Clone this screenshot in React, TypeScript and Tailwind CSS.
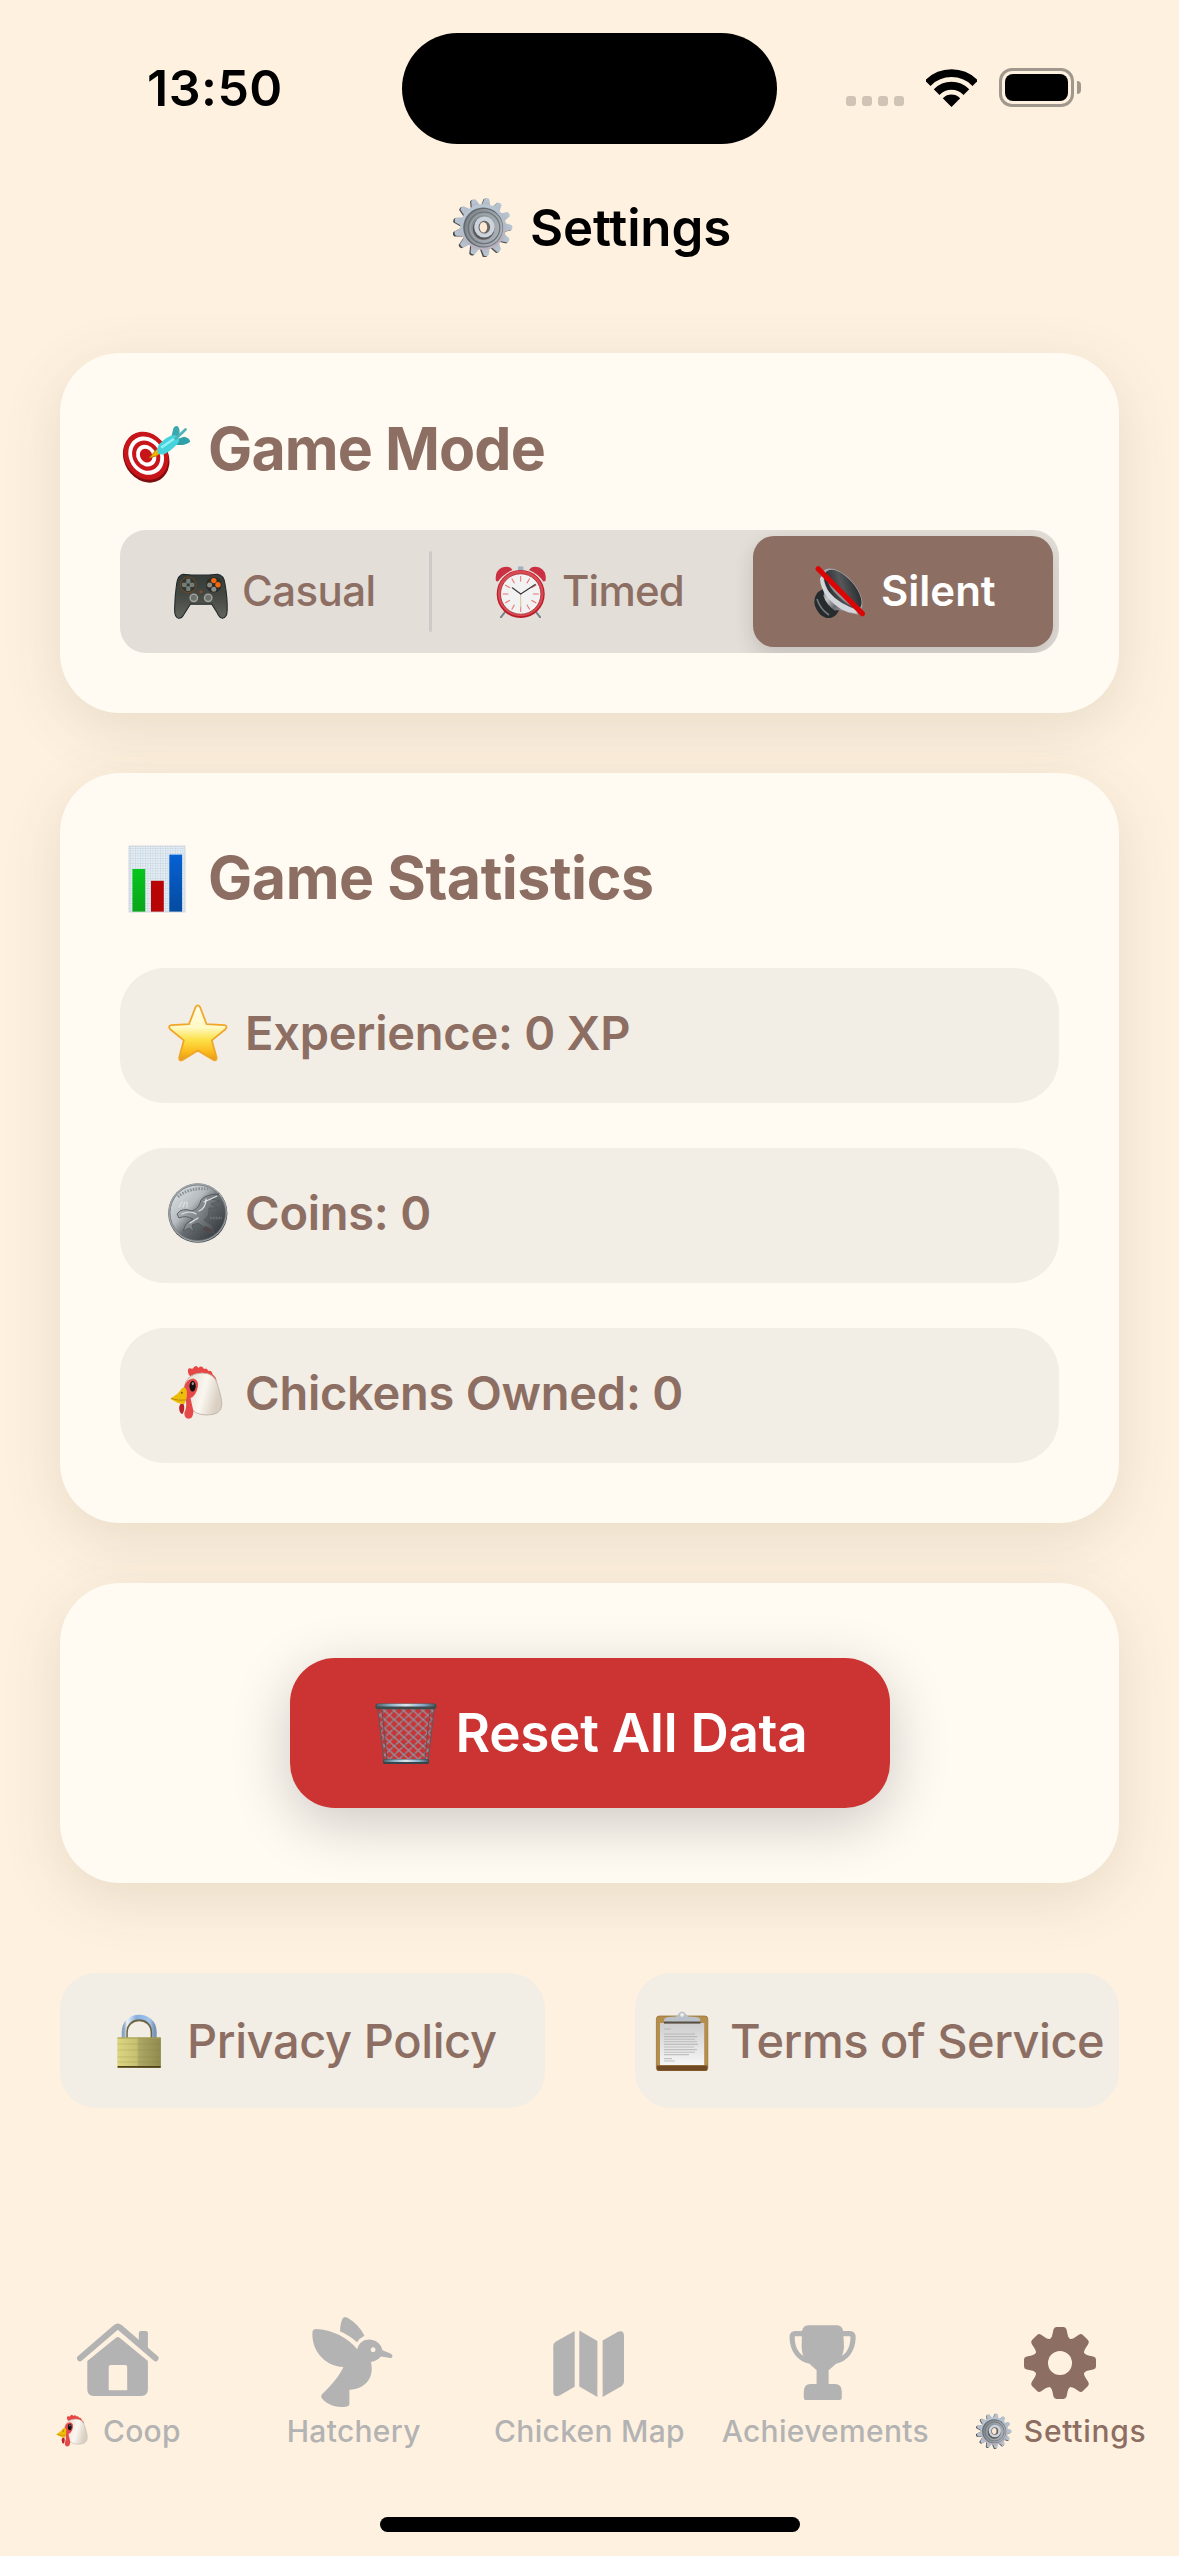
import React from "react";

type IconProps = { className?: string };

const teeth = (count: number) => Array.from({ length: count }, (_, i) => (360 / count) * i);

function SilverGear({ className }: IconProps) {
  return (
    <svg viewBox="0 0 60 60" className={className}>
      <defs>
        <linearGradient id="sg-body" x1="0" y1="0" x2="0.3" y2="1">
          <stop offset="0" stopColor="#b9c9d8" />
          <stop offset="0.5" stopColor="#b4bfcb" />
          <stop offset="1" stopColor="#b9b2be" />
        </linearGradient>
        <linearGradient id="sg-dish" x1="0" y1="0" x2="1" y2="0.4">
          <stop offset="0" stopColor="#7b8389" />
          <stop offset="0.6" stopColor="#949ca2" />
          <stop offset="1" stopColor="#aab2b8" />
        </linearGradient>
      </defs>
      <g fill="#4d4a4a">
        {teeth(13).map((a) => (
          <path key={a} d="M24 13 L26.6 2 Q29 0.4 31 2 L34 13Z" transform={`rotate(${a + 8} 28.9 30.8)`} />
        ))}
      </g>
      <g fill="url(#sg-body)">
        {teeth(13).map((a) => (
          <path key={a} d="M24.6 13 L27.6 1.6 Q30.3 -0.2 32.4 1.6 L35.8 13Z" transform={`rotate(${a + 8} 30.2 30)`} />
        ))}
        <circle cx="30.2" cy="30" r="23" />
      </g>
      <circle cx="30.2" cy="30.6" r="20" fill="#656b71" />
      <circle cx="30.8" cy="30.8" r="18.8" fill="url(#sg-dish)" />
      <circle cx="31" cy="30.8" r="15.8" fill="none" stroke="#6b7177" strokeWidth="1.2" />
      <circle cx="31" cy="30.8" r="13.6" fill="none" stroke="#a4abb1" strokeWidth="1" />
      <ellipse cx="30.6" cy="31.6" rx="10.8" ry="11.2" fill="#5a5659" />
      <ellipse cx="31.4" cy="30" rx="10.2" ry="10.6" fill="#cbd3dc" />
      <ellipse cx="31.3" cy="30.2" rx="5.8" ry="6.4" fill="#6a625f" />
      <ellipse cx="30.4" cy="30.2" rx="3.8" ry="5.2" fill="#fbe9d6" />
    </svg>
  );
}

function Target({ className }: IconProps) {
  return (
    <svg viewBox="0 0 70 70" className={className}>
      <g transform="rotate(-32 26.5 45)">
        <ellipse cx="27" cy="43.6" rx="22" ry="26.2" fill="#7d0d10" />
        <ellipse cx="27.8" cy="42" rx="21.4" ry="25" fill="#c8151a" />
        <ellipse cx="28" cy="42" rx="17" ry="20" fill="#fff" />
        <ellipse cx="28" cy="42" rx="13.4" ry="15.8" fill="#c8151a" />
        <ellipse cx="28" cy="42" rx="9.6" ry="11.4" fill="#fff" />
        <ellipse cx="28" cy="42" rx="6" ry="7.2" fill="#c8151a" />
      </g>
      <path d="M29 44 L37 35 L41 39 Q37 42.5 29 44Z" fill="#f4b400" stroke="#a8700a" strokeWidth="0.8" />
      <path d="M51 24 L53.5 14 Q56 10.5 58.5 13 Q61 18 57.5 25Z" fill="#3aa9ae" />
      <path d="M56 25.5 L64 22.8 Q70.5 24.5 70 28 Q64 32.5 55 30.5Z" fill="#2fa0a8" />
      <path d="M37.6 39 Q36 32 42.5 27 Q50 20.5 56 21.5 Q61 24 58 29 Q52 36 46.5 39 Q41.5 42 37.6 39Z" fill="#46d3dc" />
      <path d="M56 24.5 L65.5 15.5" stroke="#4fb4ba" strokeWidth="2.8" strokeLinecap="round" />
      <path d="M42 33 L53 25.5" stroke="#8ff0f4" strokeWidth="2.6" strokeLinecap="round" />
    </svg>
  );
}

function Gamepad({ className }: IconProps) {
  return (
    <svg viewBox="0 0 52 52" className={className}>
      <defs>
        <linearGradient id="gp" x1="0" y1="0" x2="0" y2="1">
          <stop offset="0" stopColor="#343b38" />
          <stop offset="0.5" stopColor="#454943" />
          <stop offset="1" stopColor="#62645d" />
        </linearGradient>
      </defs>
      <path
        d="M9 8.3 Q26 10 43.5 8.3 Q50 9 51 18 Q53.5 32 53.2 44 Q53 52 48.5 52.2 Q45.5 52 43 46.5 L37.6 38 Q26.5 38.6 16.5 38 L9.5 49 Q7.6 52.6 4.5 52.2 Q.5 51.5 .6 43 Q.8 30 2.6 18 Q4 9 9 8.3Z"
        fill="url(#gp)"
        stroke="#20292a"
        strokeWidth="1.1"
      />
      <circle cx="14.3" cy="18.8" r="7.8" fill="#303833" stroke="#6d4527" strokeWidth="1.1" />
      <g fill="#767d77">
        <rect x="12.2" y="12.8" width="4.2" height="4.8" rx="1.2" />
        <rect x="12.2" y="20.2" width="4.2" height="4.8" rx="1.2" />
        <rect x="8" y="16.8" width="4.8" height="4.2" rx="1.2" />
        <rect x="15.6" y="16.8" width="4.8" height="4.2" rx="1.2" />
      </g>
      <circle cx="39.8" cy="18.8" r="7.8" fill="#2a2d2a" />
      <circle cx="39.8" cy="14.6" r="2.7" fill="#f2690d" />
      <circle cx="44" cy="18.8" r="2.7" fill="#f2690d" />
      <circle cx="35.6" cy="19" r="2.5" fill="#888b86" />
      <circle cx="39.8" cy="23.2" r="2.5" fill="#888b86" />
      <circle cx="27" cy="25.8" r="1.6" fill="#8b4b1d" />
      <circle cx="19.8" cy="31.8" r="4.4" fill="#a3a6a0" />
      <circle cx="19.8" cy="31.8" r="3" fill="#6d716b" />
      <circle cx="34.2" cy="31.8" r="4.4" fill="#a3a6a0" />
      <circle cx="34.2" cy="31.8" r="3" fill="#6d716b" />
    </svg>
  );
}

function AlarmClock({ className }: IconProps) {
  return (
    <svg viewBox="0 0 52 52" className={className}>
      <path d="M10 46 L6 51.2 M41 46 L45 51.2" stroke="#77818a" strokeWidth="2" strokeLinecap="round" />
      <path d="M23 0.6 h5.4 v3.4 h-5.4z" fill="#a0b2c2" />
      <path d="M1 15 Q-.8 5.5 7 1.5 Q14.5 -1 17.5 4 Q8 8 3 15.5Z" fill="#ca3042" />
      <path d="M50.4 15 Q52.4 5.5 44.4 1.5 Q37 -1 34 4 Q43.4 8 48.4 15.5Z" fill="#ca3042" />
      <circle cx="25.7" cy="28" r="24" fill="#b81c2a" />
      <circle cx="25.7" cy="27.4" r="22.8" fill="#dc4a53" />
      <circle cx="25.7" cy="28" r="20.2" fill="#f2f2f2" stroke="#9e2a30" strokeWidth="0.8" />
      {teeth(12).map((a) => (
        <path key={a} d="M25.7 10 V15.6" stroke="#e8706c" strokeWidth="1" transform={`rotate(${a} 25.7 28)`} />
      ))}
      <path d="M25.7 28 V41.5" stroke="#d9c39a" strokeWidth="1" />
      <path d="M17.3 21.8 L25.7 28 L40.2 18.4" fill="none" stroke="#3a3a3a" strokeWidth="1.2" strokeLinecap="round" />
    </svg>
  );
}

function MutedSpeaker({ className }: IconProps) {
  return (
    <svg viewBox="0 0 52 52" className={className}>
      <defs>
        <linearGradient id="sp" x1="0" y1="0" x2="1" y2="1">
          <stop offset="0" stopColor="#17191a" />
          <stop offset="0.5" stopColor="#55585b" />
          <stop offset="1" stopColor="#1b1d1e" />
        </linearGradient>
        <linearGradient id="sp-c" x1="0" y1="0" x2="1" y2="0.6">
          <stop offset="0" stopColor="#4f5255" />
          <stop offset="0.35" stopColor="#c3c5c8" />
          <stop offset="0.6" stopColor="#6b6d70" />
          <stop offset="1" stopColor="#b5b7ba" />
        </linearGradient>
      </defs>
      <path d="M4 26 Q-1 32 1 40 Q5 51 14 52.4 Q19 52 22 49 L26 43 L9 23Z" fill="#262b2e" />
      <path d="M3 33 Q6 43 15 49" stroke="#767b7f" strokeWidth="1.6" fill="none" />
      <path d="M7 16 Q11 26 9.5 30 Q12 38 20.5 44.5 Q30 43.6 44 48.8 L38 30Z" fill="url(#sp-c)" />
      <ellipse cx="27.6" cy="25" rx="14.2" ry="27.2" transform="rotate(-41 27.6 25)" fill="#a4a9b1" />
      <ellipse cx="28.8" cy="24.2" rx="12.2" ry="24.8" transform="rotate(-41 28.8 24.2)" fill="url(#sp)" />
      <path d="M9 10 Q10 20 15 26 Q25 38 44 44 L42 47.6 Q26 46 14 32 Q6 22 6 12Z" fill="#d3d6da" />
      <path d="M14 16 Q17 25 30 35 Q38 41 43 42 L30 26Z" fill="#a9abae" opacity="0.75" />
      <path d="M4.2 2.8 L48.4 47.6" stroke="#dc0505" strokeWidth="5.2" strokeLinecap="round" />
    </svg>
  );
}

function BarChart({ className }: IconProps) {
  return (
    <svg viewBox="0 0 70 70" className={className}>
      <defs>
        <pattern id="bc-grid" width="2.5" height="2.5" patternUnits="userSpaceOnUse">
          <rect width="2.5" height="2.5" fill="#e8eff3" />
          <path d="M0 0 H2.5 M0 0 V2.5" stroke="#b7cbdc" strokeWidth="0.8" />
        </pattern>
        <linearGradient id="bc-g" x1="0" y1="0" x2="0" y2="1">
          <stop offset="0" stopColor="#06c61b" />
          <stop offset="1" stopColor="#0ba51b" />
        </linearGradient>
        <linearGradient id="bc-b" x1="0" y1="0" x2="0" y2="1">
          <stop offset="0" stopColor="#0661d4" />
          <stop offset="1" stopColor="#054ba0" />
        </linearGradient>
      </defs>
      <rect x="9" y="3" width="56" height="66" fill="url(#bc-grid)" stroke="#c0ccd6" strokeWidth="0.7" />
      <rect x="12.4" y="26" width="12.8" height="42.6" fill="url(#bc-g)" />
      <rect x="31" y="37.8" width="12.8" height="30.8" fill="#b80404" />
      <rect x="49.3" y="11.6" width="12.8" height="57" fill="url(#bc-b)" />
    </svg>
  );
}

function Star({ className }: IconProps) {
  return (
    <svg viewBox="0 0 60 60" className={className}>
      <defs>
        <linearGradient id="st" x1="0" y1="0" x2="0" y2="1">
          <stop offset="0" stopColor="#fffce8" />
          <stop offset="0.4" stopColor="#fff9c4" />
          <stop offset="0.62" stopColor="#fde24a" />
          <stop offset="0.85" stopColor="#fbb91c" />
          <stop offset="1" stopColor="#dd9a1c" />
        </linearGradient>
      </defs>
      <path
        d="M27.6 4 Q29.8 0.6 32 4 L38.6 21.2 L56.4 22.2 Q60.2 23 57.4 26.2 L43.8 37.4 L48.6 54.6 Q48.8 58.4 45.4 57 L29.8 47.4 L14.6 57 Q10.8 58.6 11.2 54.6 L15.8 37.4 L2.2 26.2 Q-.4 23 3.4 22.2 L21 21.2Z"
        fill="url(#st)"
        stroke="#f0a628"
        strokeWidth="1.8"
        strokeLinejoin="round"
      />
    </svg>
  );
}

function Coin({ className }: IconProps) {
  return (
    <svg viewBox="0 0 60 60" className={className}>
      <defs>
        <linearGradient id="cn" x1="0.1" y1="0.1" x2="0.85" y2="0.8">
          <stop offset="0" stopColor="#d9dee1" />
          <stop offset="0.38" stopColor="#b6bbbf" />
          <stop offset="0.6" stopColor="#676c70" />
          <stop offset="1" stopColor="#3f4448" />
        </linearGradient>
        <linearGradient id="cn-b" x1="0" y1="0" x2="1" y2="0.5">
          <stop offset="0" stopColor="#c3c8cc" />
          <stop offset="0.5" stopColor="#8b9095" />
          <stop offset="1" stopColor="#54595d" />
        </linearGradient>
      </defs>
      <circle cx="29.8" cy="30.2" r="29.6" fill="#4a4d50" />
      <circle cx="29.6" cy="29.6" r="29.3" fill="#a2a8ac" />
      <circle cx="29.8" cy="29.8" r="27.8" fill="url(#cn)" stroke="#70767a" strokeWidth="0.8" />
      <path d="M10 14 Q20 4 42 6" stroke="#8b9196" strokeWidth="3" strokeDasharray="1.6 1.2" fill="none" />
      <path
        d="M9 31 Q14 24 24 28 Q31 26 33 17 Q38 11 51 11 L44 16 L52 18 L43 21 L50 25 L41 25 Q42 33 36 37 L44 43 L46 50 L36 44 L30 40 L24 42 L26 49 L21 45 L15 48 L18 41 L25 36 Q18 32 11 35Z"
        fill="url(#cn-b)"
        stroke="#53585c"
        strokeWidth="0.9"
      />
      <path d="M14 31 Q22 27 28 31 M31 28 Q38 25 38 16 M36 19 L49 13 M22 40 L30 35 M11 24 L14 19 M15 24 L17 19 M19 24 L19 19" stroke="#dfe3e6" strokeWidth="1.2" fill="none" strokeLinecap="round" />
      <path d="M37 43 L46 47 L44 51 L35 47Z" fill="#50494b" />
      <path d="M42 35 H54" stroke="#6c7175" strokeWidth="2.4" strokeDasharray="1.8 1" />
    </svg>
  );
}

function Chicken({ className }: IconProps) {
  return (
    <svg viewBox="0 0 60 60" className={className}>
      <defs>
        <linearGradient id="ck" x1="0" y1="0" x2="1" y2="0.3">
          <stop offset="0" stopColor="#ddd4c8" />
          <stop offset="0.6" stopColor="#fbf7f0" />
          <stop offset="1" stopColor="#d9cfc2" />
        </linearGradient>
      </defs>
      <path
        d="M20.5 11 Q18.5 4.5 23 5.4 Q25 6.4 25.6 4.6 Q28 1 30.5 5 Q33.4 1.8 36 6 Q39 4.2 40.4 8 Q43.8 7 44.6 11.5 Q48 13.5 48.6 18 Q40 12 22 13Z"
        fill="#e84545"
      />
      <path d="M15.5 41 Q17 44 15.5 49 Q14.2 53 12 49 Q10 44 12.5 41Z" fill="#b92226" />
      <path d="M16 25 Q18 10.5 34 10 Q47 10 49.5 22 Q54.5 37 53.6 43 Q52.6 52.2 38 52 Q26 51.6 22.5 44 Q17 35 16 25Z" fill="url(#ck)" stroke="#c0b4a4" strokeWidth="0.9" />
      <path d="M16 25 Q18 15.6 25.5 15.4 Q31 17 29.8 24 Q28 33 22.5 35 Q24 42 25.4 48 Q25.4 55.5 20.6 55.8 Q16 55.4 16.4 49.5 Q19.4 44 17.6 36Z" fill="#e5494a" />
      <path d="M2.4 35.4 Q11 30.5 13.6 25.4 Q17.6 23 18.8 28 Q19.6 35 16.2 41 Q10.8 41.6 2.4 35.4Z" fill="#eebd0c" />
      <path d="M3 35.6 Q11 38 17.6 37" stroke="#b98b05" strokeWidth="1" fill="none" />
      <circle cx="13.8" cy="29.8" r="1" fill="#7d5b05" />
      <ellipse cx="24.6" cy="23.2" rx="3.1" ry="5.4" fill="#111" />
      <ellipse cx="24.8" cy="20.6" rx="1.1" ry="1.6" fill="#999" />
    </svg>
  );
}

function Wastebasket({ className }: IconProps) {
  return (
    <svg viewBox="0 0 62 62" className={className}>
      <defs>
        <pattern id="wb" width="9.6" height="8.8" patternUnits="userSpaceOnUse">
          <path d="M0 0 L9.6 8.8 M9.6 0 L0 8.8" stroke="#988a98" strokeWidth="1.4" />
          <path d="M-1 5 L4.8 10.4 M4.8 -1.6 L10.6 3.6" stroke="#4f5b5f" strokeWidth="0.7" />
        </pattern>
        <linearGradient id="wb-rim" x1="0" y1="0" x2="1" y2="0">
          <stop offset="0" stopColor="#4c6168" />
          <stop offset="0.25" stopColor="#8fb5cc" />
          <stop offset="0.5" stopColor="#dce8ec" />
          <stop offset="0.8" stopColor="#82a9c6" />
          <stop offset="1" stopColor="#47555a" />
        </linearGradient>
      </defs>
      <path d="M2.5 5 L59.5 5 L53 58 Q31 62 9 58Z" fill="url(#wb)" stroke="#5c5860" strokeWidth="1.1" />
      <path d="M7 8 L12 57 M55 8 L50 57" stroke="#6b4c55" strokeWidth="1" />
      <rect x="0.4" y="1.4" width="61" height="5.8" rx="2.6" fill="#3e4a4b" />
      <rect x="1.6" y="1.8" width="58.4" height="2.8" rx="1.4" fill="url(#wb-rim)" />
      <rect x="8" y="57" width="46" height="5" rx="1.5" fill="#38464b" />
      <rect x="8.6" y="57.5" width="44.8" height="2.6" rx="1" fill="url(#wb-rim)" />
    </svg>
  );
}

function Lock({ className }: IconProps) {
  return (
    <svg viewBox="0 0 60 60" className={className}>
      <defs>
        <linearGradient id="lk" x1="0" y1="0" x2="1" y2="0">
          <stop offset="0" stopColor="#ddd782" />
          <stop offset="0.44" stopColor="#c6c073" />
          <stop offset="0.5" stopColor="#ada765" />
          <stop offset="1" stopColor="#8f8a4d" />
        </linearGradient>
        <linearGradient id="lk-s" x1="0" y1="0" x2="1" y2="0">
          <stop offset="0" stopColor="#8aa4be" />
          <stop offset="0.1" stopColor="#eef3f8" />
          <stop offset="0.4" stopColor="#86aee0" />
          <stop offset="0.85" stopColor="#a5c6ec" />
          <stop offset="1" stopColor="#7994b5" />
        </linearGradient>
      </defs>
      <path d="M16.6 27 V21.8 C17 3.4 43.4 3.4 43.8 21.8 V27" fill="none" stroke="#6d6444" strokeWidth="4.4" />
      <path d="M15 27 V21 C15.5 1 45 1 45.4 21 V27" fill="none" stroke="url(#lk-s)" strokeWidth="4.6" />
      <rect x="8.3" y="26.4" width="43.6" height="30.6" rx="1" fill="url(#lk)" />
      <path d="M8.4 33 H51.8 M8.4 39 H51.8 M8.4 46 H51.8 M8.4 51 H51.8" stroke="#857f36" strokeWidth="0.6" opacity="0.4" />
      <path d="M8.4 27 H51.8" stroke="#a39c51" />
      <path d="M8.6 55.8 H51.6" stroke="#4f421a" strokeWidth="1.7" />
    </svg>
  );
}

function Clipboard({ className }: IconProps) {
  return (
    <svg viewBox="0 0 60 60" className={className}>
      <defs>
        <linearGradient id="cb" x1="0" y1="0" x2="0" y2="1">
          <stop offset="0" stopColor="#cdcdcd" />
          <stop offset="1" stopColor="#f6f6f6" />
        </linearGradient>
      </defs>
      <rect x="4.4" y="5" width="51.4" height="55" rx="3" fill="#b58d4c" stroke="#9b7636" strokeWidth="0.8" />
      <path d="M4.8 54.6 H55.4 V57 Q55.4 59.8 52.8 59.8 H7.4 Q4.8 59.8 4.8 57Z" fill="#704a24" />
      <rect x="8" y="12" width="44.2" height="42" fill="url(#cb)" />
      <g stroke="#aaaaaa" strokeWidth="1.1" opacity="0.65">
        <path d="M12 18 H19" />
        <path d="M12 23 H43 M12 25.6 H45 M12 28.2 H43 M12 30.8 H45 M12 33.4 H46 M12 36 H42 M12 38.6 H45 M12 41.2 H43 M12 43.6 H37" />
        <path d="M12 47.6 H20 M12 50 H23" />
      </g>
      <rect x="12" y="9.6" width="36.4" height="3" fill="#594e43" />
      <path d="M12 10.6 V8.4 Q13 6.4 17 6 L24 5.6 Q26 5 26.6 2.6 Q30 -1.8 33.6 2.6 Q34.2 5 36.4 5.6 L44 6 Q47.6 6.4 48.4 8.4 V10.6Z" fill="#bac1c8" />
      <circle cx="30.1" cy="3.8" r="1.9" fill="#f2ede5" />
    </svg>
  );
}

function HouseTab({ className }: IconProps) {
  return (
    <svg viewBox="0 0 100 96" className={className} fill="currentColor">
      <path d="M12 45.2 L47.6 14.6 Q49.8 12.8 52 14.6 L87.6 45.2" fill="none" stroke="currentColor" strokeWidth="6" strokeLinecap="round" strokeLinejoin="round" />
      <path d="M70.8 30 V20 Q70.8 18 73 18 H77.8 Q79.9 18 79.9 20 V38Z" />
      <path
        fillRule="evenodd"
        d="M48 24.8 Q49.8 23.4 51.6 24.8 L79.9 48 V76.5 Q79.9 83 73.4 83 H25.8 Q19.3 83 19.3 76.5 V48Z M42.7 52 Q40.7 52 40.7 54 V77.2 H59.2 V54 Q59.2 52 57.2 52Z"
      />
    </svg>
  );
}

function BirdTab({ className }: IconProps) {
  return (
    <svg viewBox="0 0 100 96" className={className} fill="currentColor">
      <path d="M36 18.2 Q36.2 10.5 38.6 5.6 Q40 3.2 43 4.6 Q54 10.5 60.5 22.7 Q55.5 25 53 29.3 Q45.5 22.3 36 18.2Z" />
      <path
        fillRule="evenodd"
        d="M11.5 16 C29 16.8 43.5 24.5 53.3 36.3 C56 22.6 75.5 23.6 78.5 37.3 L87 40.8 Q89.2 42.2 88.2 44.3 Q87.8 45.1 86.5 44.9 L77 43.4 Q73.5 47.6 66.9 48.9 C70.6 64 62 75.8 45.4 76.7 V91.4 Q45.2 92.8 43 93.4 C32 95.6 22 91 17.6 85 Q16.6 82.8 18 81.2 C28 72 35.5 62.5 39.4 54 C20 53 7 37 8.5 18.5 Q8.8 16 11.5 16Z M69.1 34.3 a2.4 2.4 0 1 0 0.01 0Z"
      />
    </svg>
  );
}

function MapTab({ className }: IconProps) {
  return (
    <svg viewBox="0 0 100 96" className={className} fill="currentColor">
      <path d="M14.3 33.5 Q14.3 30.3 17 28.6 L35.7 18 V73.8 L20.5 82.4 Q14.3 85 14.3 78.5Z" />
      <path d="M40.3 17.4 L58.4 28 V84 L40.3 73.6Z" />
      <path d="M63.6 27.4 L79 18.8 Q85 16.6 85 23 V68.5 Q85 71.6 82.4 73.2 L63.6 84Z" />
    </svg>
  );
}

function TrophyTab({ className }: IconProps) {
  return (
    <svg viewBox="0 0 100 96" className={className} fill="currentColor">
      <path d="M33 12.3 H62.2 Q67 12.5 68.2 18 L69 34 Q68 45.5 62 50 L53.6 57.3 V71 H60 Q66.8 71.4 66.8 78.5 V85 Q66.8 87 64.8 87 H30.8 Q28.8 87 28.8 85 V78.5 Q28.8 71.4 35.4 71 H41.6 V57.3 L33.7 50 Q27 45.5 26.6 34 L27 18 Q28.2 12.5 33 12.3Z" />
      <path d="M28 20.6 H20.4 Q17 20.8 17.1 24.5 C17.4 37 24 45.8 35 48.2 M67.2 20.6 H74.8 Q78.2 20.8 78.1 24.5 C77.8 37 71.2 45.8 60.2 48.2" fill="none" stroke="currentColor" strokeWidth="5.2" />
    </svg>
  );
}

function GearTab({ className }: IconProps) {
  return (
    <svg viewBox="0 0 100 96" className={className} fill="currentColor">
      {teeth(8).map((a) => (
        <path key={a} d="M36.5 27.5 Q40.6 26 41.4 21.5 L42.4 16.8 Q43 14 45.4 14 H52.6 Q55 14 55.6 16.8 L56.6 21.5 Q57.4 26 61.5 27.5 L49 50Z" transform={`rotate(${a} 49 50)`} />
      ))}
      <circle cx="49" cy="50" r="19" fill="none" stroke="currentColor" strokeWidth="14" />
      <circle cx="49" cy="50" r="12" fill="#fff1e0" />
    </svg>
  );
}

function Wifi({ className }: IconProps) {
  return (
    <svg viewBox="0 0 51 38" className={className}>
      <defs>
        <clipPath id="fan">
          <path d="M25.5 38 L-9 3.5 V-10 H60 V3.5Z" />
        </clipPath>
      </defs>
      <g clipPath="url(#fan)">
        <circle cx="25.5" cy="37.4" r="33.2" fill="none" stroke="#000" strokeWidth="7.8" />
        <circle cx="25.5" cy="37.4" r="20.6" fill="none" stroke="#000" strokeWidth="8" />
        <circle cx="25.5" cy="37.4" r="11.8" fill="#000" />
      </g>
    </svg>
  );
}

function StatusBar() {
  return (
    <header className="flex h-[177px] items-start">
      <div className="ml-[147px] mt-[63px] w-[255px] text-[50px] font-semibold leading-[50px] tracking-[0.5px]">13:50</div>
      <div className="mt-[33px] h-[111px] w-[375px] rounded-full bg-black" />
      <div className="ml-[69px] mt-[96px] flex gap-[6px]">
        {[0, 1, 2, 3].map((i) => (
          <span key={i} className="h-[10px] w-[10px] rounded-[3px] bg-[#cfc4b5]" />
        ))}
      </div>
      <Wifi className="ml-[22px] mt-[69px] h-[38px] w-[51px]" />
      <div className="ml-[22px] mt-[68px] flex items-center gap-[3px]">
        <div className="h-[39px] w-[75px] rounded-[13px] border-[3px] border-[#a1988d] p-[3px]">
          <div className="h-full w-full rounded-[8px] bg-black" />
        </div>
        <div className="h-[13px] w-[4px] rounded-r-full bg-[#a1988d]" />
      </div>
    </header>
  );
}

function Card({ className = "", children }: { className?: string; children: React.ReactNode }) {
  return <section className={`rounded-[60px] bg-[#fffaf2] shadow-[0_15px_60px_rgba(60,70,20,0.125)] ${className}`}>{children}</section>;
}

function StatRow({ icon, text }: { icon: React.ReactNode; text: string }) {
  return (
    <div className="flex h-[135px] items-center rounded-[45px] bg-[#f2ede5] pb-[5px] pl-[48px]">
      {icon}
      <span className="mb-[2px] ml-[17px] whitespace-nowrap text-[47px] font-semibold leading-none tracking-[-0.25px]">{text}</span>
    </div>
  );
}

function Tab({ icon, emoji, label, active }: { icon: React.ReactNode; emoji?: React.ReactNode; label: string; active?: boolean }) {
  return (
    <div className={`flex flex-col items-center ${active ? "text-[#8d6e63]" : "text-[#b3b3b3]"}`}>
      {icon}
      <div className="mt-[4px] flex h-[36px] items-center gap-[12px]">
        {emoji}
        <span className={`whitespace-nowrap text-[30px] font-medium leading-none ${active ? "tracking-[0.7px]" : "tracking-[0.3px]"}`}>{label}</span>
      </div>
    </div>
  );
}

export default function App() {
  const tabIcon = "h-[96px] w-[100px]";
  return (
    <div className="flex h-[2556px] w-[1179px] flex-col overflow-hidden bg-[#fff1e0] font-['Inter',sans-serif] text-black">
      <StatusBar />
      <h1 className="flex h-[100px] items-center pl-[453px] text-[51px] font-semibold leading-none">
        <SilverGear className="h-[60px] w-[60px]" />
        <span className="ml-[17px] tracking-[-0.15px]">Settings</span>
      </h1>

      <main className="mt-[76px] flex flex-col gap-[60px] px-[60px] text-[#8d6e63]">
        <Card className="h-[360px] px-[60px] pt-[60px]">
          <h2 className="flex h-[71px] items-center text-[59px] font-bold leading-none">
            <Target className="h-[70px] w-[70px]" />
            <span className="ml-[18px] tracking-[-0.9px]">Game Mode</span>
          </h2>
          <div className="mt-[46px] flex h-[123px] items-center overflow-hidden rounded-[26px] bg-[#e3ded8] text-[42px] font-medium leading-none">
            <div className="flex w-[309px] items-center pl-[54px]">
              <Gamepad className="h-[52px] w-[52px] overflow-visible" />
              <span className="mb-[2px] ml-[16px] tracking-[-0.6px]">Casual</span>
            </div>
            <div className="h-[81px] w-[3px] rounded-full bg-[#cfcac7]" />
            <div className="flex w-[321px] items-center pl-[63px]">
              <AlarmClock className="h-[52px] w-[52px]" />
              <span className="mb-[2px] ml-[15px] tracking-[-0.8px]">Timed</span>
            </div>
            <div className="flex h-[111px] w-[300px] items-center rounded-[21px] bg-[#8d6e63] pl-[61px] font-semibold text-white shadow-[0_8px_20px_rgba(0,0,0,0.14)]">
              <MutedSpeaker className="h-[52px] w-[52px]" />
              <span className="mb-[2px] ml-[15px] tracking-[0px]">Silent</span>
            </div>
          </div>
        </Card>

        <Card className="h-[750px] px-[60px] pt-[69px]">
          <h2 className="flex h-[71px] items-center text-[59px] font-bold leading-none">
            <BarChart className="h-[70px] w-[70px]" />
            <span className="ml-[18px] tracking-[-0.45px]">Game Statistics</span>
          </h2>
          <div className="mt-[55px] flex flex-col gap-[45px]">
            <StatRow icon={<Star className="h-[60px] w-[60px]" />} text="Experience: 0 XP" />
            <StatRow icon={<Coin className="h-[60px] w-[60px]" />} text="Coins: 0" />
            <StatRow icon={<Chicken className="h-[60px] w-[60px]" />} text="Chickens Owned: 0" />
          </div>
        </Card>

        <Card className="flex h-[300px] items-center justify-center">
          <button className="flex h-[150px] w-[600px] items-center rounded-[45px] bg-[#cc3333] pl-[85px] text-[53px] font-semibold leading-none text-white shadow-[0_15px_60px_rgba(0,0,0,0.2)]">
            <Wastebasket className="h-[62px] w-[62px]" />
            <span className="ml-[19px] whitespace-nowrap tracking-[-0.25px]">Reset All Data</span>
          </button>
        </Card>
      </main>

      <div className="mt-[90px] flex justify-between px-[60px] text-[47px] font-medium leading-none text-[#8d6e63]">
        <button className="flex h-[135px] w-[485px] items-center rounded-[36px] bg-[#f2ede5] pl-[49px]">
          <Lock className="h-[60px] w-[60px]" />
          <span className="ml-[18px] whitespace-nowrap tracking-[-0.4px]">Privacy Policy</span>
        </button>
        <button className="flex h-[135px] w-[484px] items-center rounded-[36px] bg-[#f2ede5] pl-[17px]">
          <Clipboard className="h-[60px] w-[60px]" />
          <span className="ml-[18px] whitespace-nowrap tracking-[-0.5px]">Terms of Service</span>
        </button>
      </div>

      <nav className="mt-[205px] grid grid-cols-5">
        <Tab icon={<HouseTab className={tabIcon} />} emoji={<Chicken className="h-[36px] w-[36px]" />} label="Coop" />
        <Tab icon={<BirdTab className={tabIcon} />} label="Hatchery" />
        <Tab icon={<MapTab className={tabIcon} />} label="Chicken Map" />
        <Tab icon={<TrophyTab className={tabIcon} />} label="Achievements" />
        <Tab icon={<GearTab className={tabIcon} />} emoji={<SilverGear className="h-[36px] w-[36px]" />} label="Settings" active />
      </nav>
      <div className="mx-auto mt-[68px] h-[15px] w-[420px] rounded-full bg-black" />
    </div>
  );
}
